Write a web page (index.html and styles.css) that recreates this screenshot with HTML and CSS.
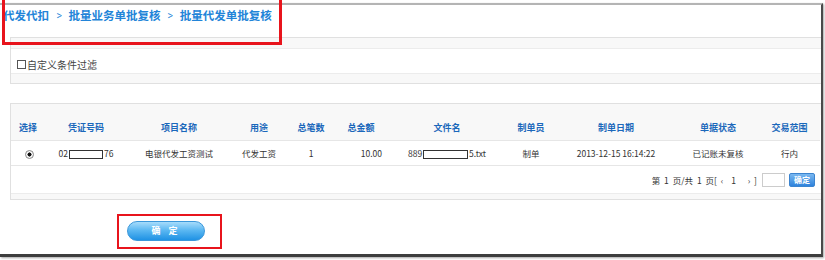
FILE: index.html
```html
<!DOCTYPE html>
<html lang="zh-CN">
<head>
<meta charset="utf-8">
<title>批量代发单批复核</title>
<link rel="stylesheet" href="styles.css">
</head>
<body>
<div class="frame">
  <div class="crumb">代发代扣<span class="sep">&gt;</span>批量业务单批复核<span class="sep">&gt;</span>批量代发单批复核</div>

  <div class="panel filter">
    <div class="strip"></div>
    <div class="filter-body"><span class="box"></span>自定义条件过滤</div>
    <div class="strip bottom"></div>
  </div>

  <div class="panel list">
    <div class="strip head"></div>
    <table class="grid">
      <colgroup>
        <col class="c1"><col class="c2"><col class="c3"><col class="c4"><col class="c5"><col class="c6"><col class="c7"><col class="c8"><col class="c9"><col class="c10"><col class="c11">
      </colgroup>
      <thead>
        <tr><th>选择</th><th>凭证号码</th><th>项目名称</th><th>用途</th><th>总笔数</th><th>总金额</th><th>文件名</th><th>制单员</th><th>制单日期</th><th>单据状态</th><th>交易范围</th></tr>
      </thead>
      <tbody>
        <tr>
          <td><span class="radio"></span></td>
          <td>02<span class="mask m1"></span>76</td>
          <td>电银代发工资测试</td>
          <td>代发工资</td>
          <td>1</td>
          <td class="amt">10.00</td>
          <td>889<span class="mask m2"></span>5.txt</td>
          <td>制单</td>
          <td>2013-12-15 16:14:22</td>
          <td>已记账未复核</td>
          <td>行内</td>
        </tr>
      </tbody>
    </table>
    <div class="pager">
      <span class="pinfo">第 1 页/共 1 页[ ‹  1   › ]</span>
      <span class="pinput"></span>
      <span class="pbtn">确定</span>
    </div>
    <div class="strip foot"></div>
  </div>

  <div class="actions">
    <span class="ok">确 定</span>
  </div>
</div>
<div class="mark top"></div>
</body>
</html>
```
FILE: styles.css
```css
html, body {
  margin: 0;
  padding: 0;
  background: #fff;
}
body {
  position: relative;
  width: 825px;
  height: 260px;
  overflow: hidden;
  font-family: "Noto Sans CJK SC", "Noto Sans", sans-serif;
}
.frame {
  margin-top: 3px;
  width: 823px;
  height: 254px;
  box-sizing: border-box;
  border-top: 2px solid #b4b4b4;
  border-right: 2px solid #4a4a4a;
  border-bottom: 3px solid #3e3e3e;
  box-shadow: 1px 1px 2px rgba(0,0,0,0.35);
  overflow: hidden;
}
.crumb {
  height: 32px;
  line-height: 20px;
  padding-left: 3px;
  font-size: 11.5px;
  font-weight: bold;
  color: #2284d8;
  white-space: nowrap;
}
.crumb .sep {
  display: inline-block;
  margin: 0 6px 0 7px;
  font-weight: normal;
  transform: scaleX(0.8);
}
.panel {
  margin-left: 10px;
  border: 1px solid #e0e0e0;
  border-right: none;
  background: #fff;
}
.strip {
  height: 10px;
  background: #f8f8f8;
  border-bottom: 1px solid #ececec;
}
.strip.bottom {
  height: 9px;
  border-bottom: none;
  border-top: 1px solid #ececec;
}
.filter-body {
  height: 17px;
  padding: 7px 0 0 6px;
  line-height: 14px;
  font-size: 10px;
  color: #444;
  display: flex;
  align-items: center;
}
.filter-body .box {
  width: 7px;
  height: 7px;
  border: 1px solid #555;
  margin-right: 1px;
}
.list {
  margin-top: 19px;
}
.strip.head {
  height: 11px;
  border-bottom: none;
}
.grid {
  table-layout: fixed;
  border-collapse: collapse;
  width: 809px;
}
.c1 { width: 34px; }
.c2 { width: 82px; }
.c3 { width: 104px; }
.c4 { width: 56px; }
.c5 { width: 48px; }
.c6 { width: 52px; }
.c7 { width: 120px; }
.c8 { width: 48px; }
.c9 { width: 122px; }
.c10 { width: 82px; }
.c11 { width: 61px; }
.grid th {
  height: 25px;
  padding: 0;
  background: #f8f8f8;
  color: #1b68bb;
  font-size: 9px;
  font-weight: bold;
  text-align: center;
  border-bottom: 1px solid #e6e6e6;
  white-space: nowrap;
}
.grid td {
  height: 24px;
  padding: 0;
  font-size: 8.5px;
  color: #333;
  text-align: center;
  border-bottom: 1px solid #e6e6e6;
  white-space: nowrap;
}
.grid td.amt {
  text-align: right;
  padding-right: 5px;
}
.radio {
  display: inline-block;
  width: 7px;
  height: 7px;
  border: 1px solid #8a8a8a;
  border-radius: 50%;
  background: radial-gradient(circle, #111 0 1.8px, #fff 2.3px, #e6e6e6 100%);
  vertical-align: middle;
  margin-left: 2px;
}
.mask {
  display: inline-block;
  height: 9px;
  border: 1px solid #333;
  background: #fff;
  vertical-align: middle;
  box-sizing: border-box;
}
.m1 { width: 34px; margin: 0 1px; }
.m2 { width: 45px; margin: 0 1px; }
.pager {
  height: 27px;
  display: flex;
  justify-content: flex-end;
  align-items: center;
  padding-right: 6px;
  font-size: 8.5px;
  color: #333;
}
.pinfo {
  white-space: pre;
  word-spacing: 2px;
}
.pinput {
  width: 21px;
  height: 12px;
  border: 1px solid #ccc;
  margin-left: 5px;
  background: #fff;
}
.pbtn {
  width: 24px;
  height: 12px;
  margin-left: 4px;
  border-radius: 2px;
  background: linear-gradient(#7ab8f0, #2f83dc);
  border: 1px solid #3b84cf;
  box-sizing: content-box;
  color: #fff;
  font-size: 8px;
  font-weight: bold;
  line-height: 12px;
  text-align: center;
}
.strip.foot {
  height: 5px;
  border-bottom: none;
  border-top: 1px solid #ececec;
}
.actions {
  margin: 14px 0 0 117px;
  border: 2px solid #e8141c;
  padding: 5px 0 0 8px;
  box-sizing: border-box;
  width: 105px;
  height: 35px;
}
.ok {
  display: block;
  width: 78px;
  height: 20px;
  box-sizing: border-box;
  border-radius: 10px;
  border: 1px solid #3b97da;
  background: linear-gradient(#a7dcfb 0%, #5cb8f2 45%, #1f92e4 100%);
  color: #fff;
  font-size: 9px;
  font-weight: bold;
  text-align: center;
  line-height: 18px;
  letter-spacing: 3px;
  text-indent: 0;
}
.mark.top {
  position: absolute;
  left: 2px;
  top: -4px;
  width: 280px;
  height: 49px;
  box-sizing: border-box;
  border: 3.5px solid #e8141c;
}
```
